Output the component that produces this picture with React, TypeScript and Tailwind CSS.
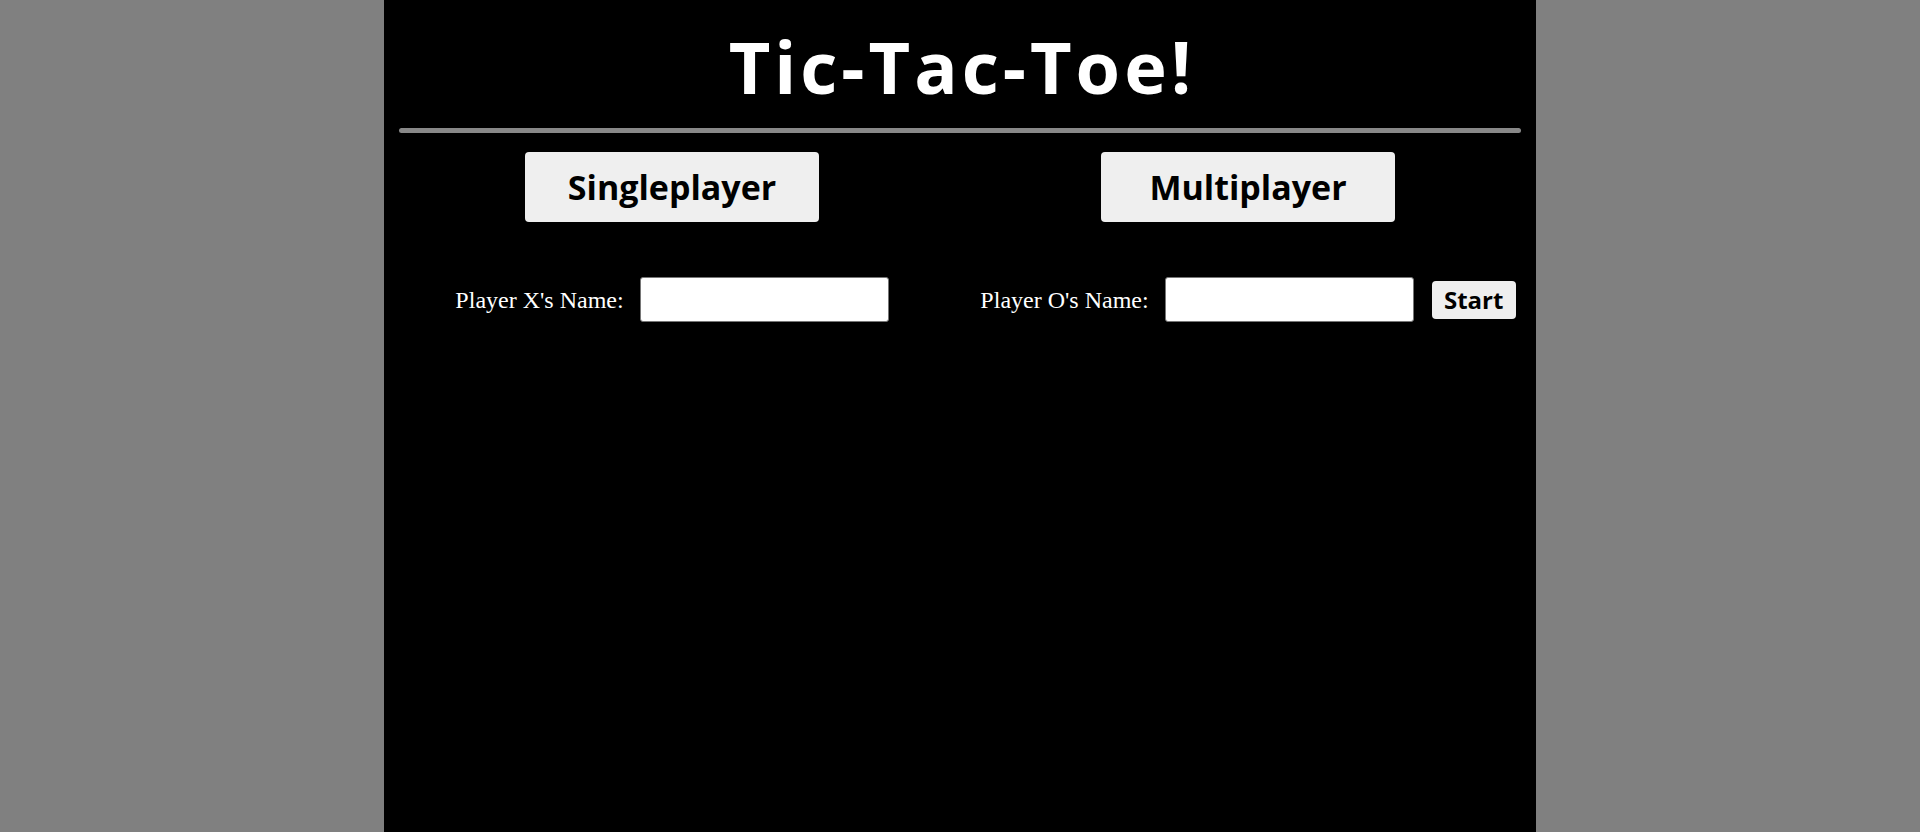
export default function App() {
  const comic = "font-['Comic_Sans_MS','Open_Sans',sans-serif] font-bold";
  return (
    <div className="min-h-screen bg-[#808080]">
      <div className="mx-auto min-h-screen w-[1152px] bg-black">
        <h1 className={`${comic} pt-[26px] pl-[4px] text-center text-[72px] leading-[80px] tracking-[4px] text-white`}>
          Tic-Tac-Toe!
        </h1>
        <div className="mx-[15px] mt-[22px] h-[5px] rounded-full bg-[#888888]" />
        <div className="mt-[19px] grid grid-cols-2">
          <div className="flex justify-center">
            <button className={`${comic} h-[70px] w-[294px] rounded-[4px] bg-[#efefef] text-[34px] text-black`}>
              Singleplayer
            </button>
          </div>
          <div className="flex justify-center">
            <button className={`${comic} h-[70px] w-[294px] rounded-[4px] bg-[#efefef] text-[34px] text-black`}>
              Multiplayer
            </button>
          </div>
        </div>
        <div className="mt-[55px] grid grid-cols-2">
          <div className="flex items-center justify-center gap-4">
            <label className="font-['Liberation_Serif',serif] text-[24px] text-white">
              Player X's Name:
            </label>
            <input
              type="text"
              className="h-[45px] w-[249px] rounded-[3px] border border-[#767676] bg-white"
            />
          </div>
          <div className="flex items-center justify-center">
            <label className="font-['Liberation_Serif',serif] text-[24px] text-white">
              Player O's Name:
            </label>
            <input
              type="text"
              className="ml-4 h-[45px] w-[249px] rounded-[3px] border border-[#767676] bg-white"
            />
            <button className={`${comic} ml-[18px] h-[38px] w-[84px] rounded-[4px] bg-[#efefef] text-[24px] text-black`}>
              Start
            </button>
          </div>
        </div>
      </div>
    </div>
  );
}
